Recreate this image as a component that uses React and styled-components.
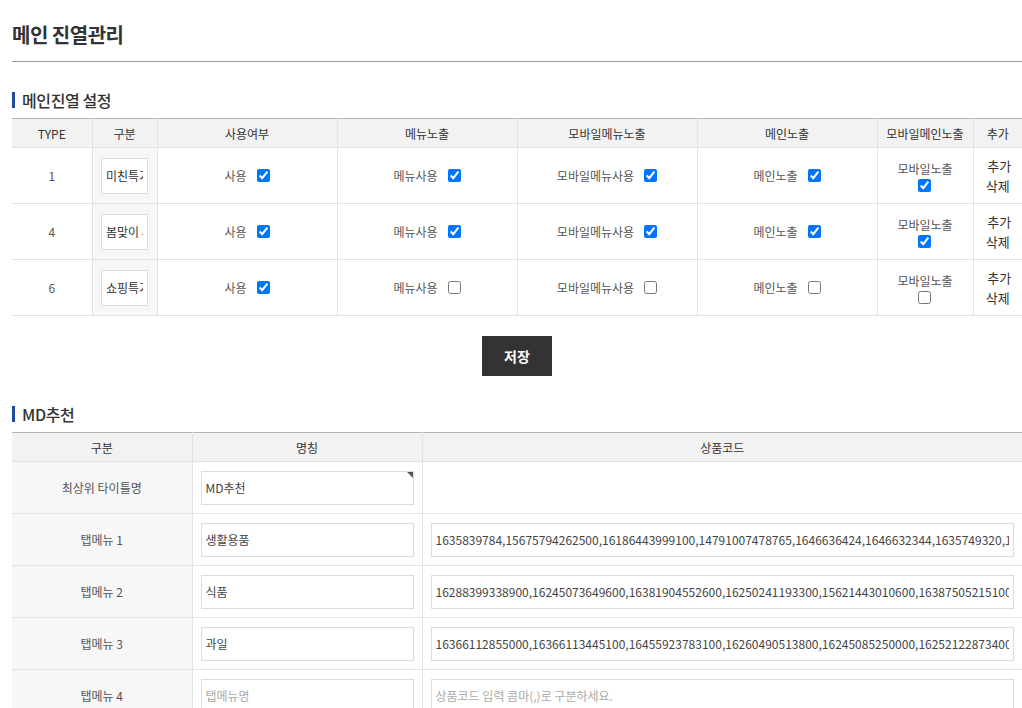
import styled, { createGlobalStyle } from "styled-components";

const GlobalStyle = createGlobalStyle`
  html, body {
    margin: 0;
    padding: 0;
    background: #fff;
    overflow: hidden;
  }
  body {
    font-family: "Noto Sans CJK KR", "Noto Sans", sans-serif;
    color: #333;
  }
`;

const Page = styled.div`
  width: 1010px;
  padding: 0 0 0 12px;
`;

const PageTitle = styled.h1`
  margin: 0;
  padding: 20px 0 11px;
  font-size: 20px;
  font-weight: 700;
  line-height: 30px;
  color: #333;
  letter-spacing: -0.5px;
  border-bottom: 1px solid #999;
`;

const SectionTitle = styled.h2`
  display: flex;
  align-items: center;
  gap: 7px;
  margin: ${(p) => p.$top}px 0 7px;
  font-size: 16px;
  font-weight: 500;
  line-height: 22px;
  color: #333;
  letter-spacing: -0.4px;
  &::before {
    content: "";
    width: 3px;
    height: 16px;
    background: #1f4a9c;
  }
`;

const Table = styled.table`
  width: 1010px;
  border-collapse: collapse;
  table-layout: fixed;
  border-top: 1px solid #b4b4b4;
  font-size: 12px;
`;

const Th = styled.th`
  height: 28px;
  padding: 0;
  background: #f2f2f2;
  font-weight: 400;
  color: #333;
  border-left: 1px solid #e2e2e2;
  border-bottom: 1px solid #e2e2e2;
  &:first-child {
    border-left: 0;
  }
`;

const Td = styled.td`
  height: ${(p) => p.$h || 55}px;
  padding: 0 ${(p) => (p.$pad != null ? p.$pad : 0)}px;
  text-align: ${(p) => p.$align || "center"};
  color: #555;
  background: ${(p) => (p.$gray ? "#f7f7f7" : "#fff")};
  border-left: 1px solid #e2e2e2;
  border-bottom: 1px solid #e2e2e2;
  &:first-child {
    border-left: 0;
  }
`;

const NameInput = styled.input`
  box-sizing: border-box;
  width: 47px;
  height: 36px;
  padding: 0 4px;
  border: 1px solid #dcdcdc;
  background: #fff;
  font: inherit;
  font-size: 12px;
  color: #333;
  outline: none;
`;

const Check = styled.label`
  display: inline-flex;
  flex-direction: ${(p) => (p.$stack ? "column" : "row")};
  align-items: center;
  gap: ${(p) => (p.$stack ? 2 : 10)}px;
  color: #555;
  input {
    width: 13px;
    height: 13px;
    margin: 0;
    accent-color: #0075ff;
  }
`;

const ActionCell = styled.div`
  display: flex;
  flex-direction: column;
  align-items: center;
  line-height: 20px;
  font-size: 13px;
  color: #333;
  span:first-child {
    padding-left: 3px;
  }
`;

const ButtonRow = styled.div`
  display: flex;
  justify-content: center;
  padding-top: 20px;
`;

const SaveButton = styled.button`
  width: 70px;
  height: 40px;
  border: 0;
  background: #333;
  color: #fff;
  font: inherit;
  font-size: 14px;
  font-weight: 700;
`;

const FieldWrap = styled.div`
  position: relative;
  display: flex;
`;

const Field = styled.input`
  box-sizing: border-box;
  width: 100%;
  height: 34px;
  padding: 0 4px;
  border: 1px solid #dcdcdc;
  background: #fff;
  font: inherit;
  font-size: 12px;
  color: #444;
  outline: none;
  &::placeholder {
    color: #aaa;
  }
`;

const Corner = styled.span`
  position: absolute;
  top: 1px;
  right: 1px;
  width: 0;
  height: 0;
  border-top: 6px solid #555;
  border-left: 6px solid transparent;
`;

const Code = styled(Field)`
  letter-spacing: 0;
`;

const rows = [
  { type: 1, name: "미친특가", use: true, menu: true, mmenu: true, main: true, mmain: true },
  { type: 4, name: "봄맞이 세일", use: true, menu: true, mmenu: true, main: true, mmain: true },
  { type: 6, name: "쇼핑특가", use: true, menu: false, mmenu: false, main: false, mmain: false },
];

const tabs = [
  {
    label: "탭메뉴 1",
    name: "생활용품",
    code: "1635839784,15675794262500,16186443999100,14791007478765,1646636424,1646632344,1635749320,1635749321,1646632345",
  },
  {
    label: "탭메뉴 2",
    name: "식품",
    code: "16288399338900,16245073649600,16381904552600,16250241193300,15621443010600,16387505215100,16387505215200",
  },
  {
    label: "탭메뉴 3",
    name: "과일",
    code: "16366112855000,16366113445100,16455923783100,16260490513800,16245085250000,16252122873400,16252122873500",
  },
  { label: "탭메뉴 4", name: "", code: "" },
];

const Box = ({ label, checked, stack }) => (
  <Check $stack={stack}>
    <span>{label}</span>
    <input type="checkbox" defaultChecked={checked} />
  </Check>
);

export default function App() {
  return (
    <Page>
      <GlobalStyle />
      <PageTitle>메인 진열관리</PageTitle>

      <SectionTitle $top={27}>메인진열 설정</SectionTitle>
      <Table>
        <colgroup>
          <col width="80" />
          <col width="65" />
          <col width="180" />
          <col width="180" />
          <col width="180" />
          <col width="180" />
          <col width="96" />
          <col width="49" />
        </colgroup>
        <thead>
          <tr>
            <Th>TYPE</Th>
            <Th>구분</Th>
            <Th>사용여부</Th>
            <Th>메뉴노출</Th>
            <Th>모바일메뉴노출</Th>
            <Th>메인노출</Th>
            <Th>모바일메인노출</Th>
            <Th>추가</Th>
          </tr>
        </thead>
        <tbody>
          {rows.map((r) => (
            <tr key={r.type}>
              <Td>{r.type}</Td>
              <Td $gray>
                <NameInput defaultValue={r.name} />
              </Td>
              <Td>
                <Box label="사용" checked={r.use} />
              </Td>
              <Td>
                <Box label="메뉴사용" checked={r.menu} />
              </Td>
              <Td>
                <Box label="모바일메뉴사용" checked={r.mmenu} />
              </Td>
              <Td>
                <Box label="메인노출" checked={r.main} />
              </Td>
              <Td>
                <Box label="모바일노출" checked={r.mmain} stack />
              </Td>
              <Td>
                <ActionCell>
                  <span>추가</span>
                  <span>삭제</span>
                </ActionCell>
              </Td>
            </tr>
          ))}
        </tbody>
      </Table>

      <ButtonRow>
        <SaveButton type="button">저장</SaveButton>
      </ButtonRow>

      <SectionTitle $top={27}>MD추천</SectionTitle>
      <Table>
        <colgroup>
          <col width="180" />
          <col width="230" />
          <col width="600" />
        </colgroup>
        <thead>
          <tr>
            <Th>구분</Th>
            <Th>명칭</Th>
            <Th>상품코드</Th>
          </tr>
        </thead>
        <tbody>
          <tr>
            <Td $gray $h={51}>최상위 타이틀명</Td>
            <Td $h={51} $pad={8} $align="left">
              <FieldWrap>
                <Field defaultValue="MD추천" />
                <Corner />
              </FieldWrap>
            </Td>
            <Td $h={51} />
          </tr>
          {tabs.map((t) => (
            <tr key={t.label}>
              <Td $gray $h={51}>{t.label}</Td>
              <Td $h={51} $pad={8} $align="left">
                <Field defaultValue={t.name} placeholder="탭메뉴명" />
              </Td>
              <Td $h={51} $pad={8} $align="left">
                <Code defaultValue={t.code} placeholder="상품코드 입력 콤마(,)로 구분하세요." />
              </Td>
            </tr>
          ))}
        </tbody>
      </Table>
    </Page>
  );
}
